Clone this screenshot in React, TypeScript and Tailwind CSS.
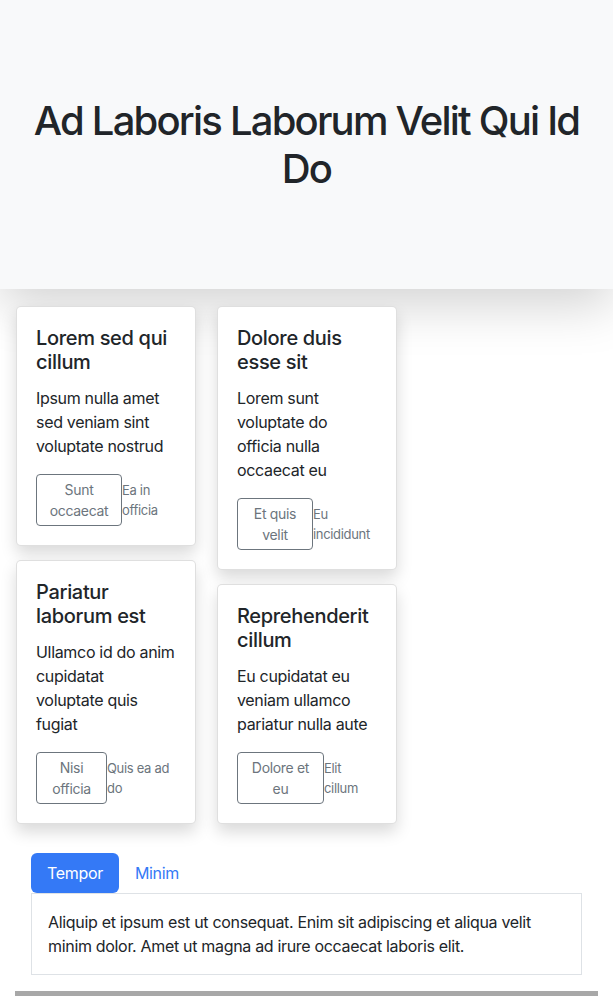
import React from "react";

type Card = { title: string[]; body: string[]; btn: string; btnW: string; small: string };

const left: Card[] = [
  { title: ["Lorem sed qui", "cillum"], body: ["Ipsum nulla amet", "sed veniam sint", "voluptate nostrud"], btn: "Sunt occaecat", btnW: "w-[86px]", small: "Ea in officia" },
  { title: ["Pariatur", "laborum est"], body: ["Ullamco id do anim", "cupidatat", "voluptate quis", "fugiat"], btn: "Nisi officia", btnW: "w-[71px]", small: "Quis ea ad do" },
];
const right: Card[] = [
  { title: ["Dolore duis", "esse sit"], body: ["Lorem sunt", "voluptate do", "officia nulla", "occaecat eu"], btn: "Et quis velit", btnW: "w-[76px]", small: "Eu incididunt" },
  { title: ["Reprehenderit", "cillum"], body: ["Eu cupidatat eu", "veniam ullamco", "pariatur nulla aute"], btn: "Dolore et eu", btnW: "w-[87px]", small: "Elit cillum" },
];

function CardView({ c }: { c: Card }) {
  return (
    <div className="bg-white border border-[rgba(0,0,0,0.125)] rounded-[5px] shadow-[0_8px_16px_rgba(0,0,0,0.15)] p-[19px]">
      <h5 className="text-[20px] leading-[24px] font-medium text-[#212529] mb-[12px]">
        {c.title.map((t) => (
          <span key={t} className="block whitespace-nowrap">{t}</span>
        ))}
      </h5>
      <p className="text-[16px] leading-[24px] text-[#212529] mb-[16px]">
        {c.body.map((t) => (
          <span key={t} className="block whitespace-nowrap">{t}</span>
        ))}
      </p>
      <div className="flex items-center">
        <button className={`${c.btnW} shrink-0 border border-[#6c757d] rounded-[4px] px-[6px] py-[4px] text-[14px] leading-[21px] text-[#6c757d] text-center bg-white`}>
          {c.btn}
        </button>
        <span className="text-[13px] leading-[20px] text-[#6c757d]">{c.small}</span>
      </div>
    </div>
  );
}

export default function App() {
  return (
    <div className="min-h-[996px] bg-white overflow-hidden tracking-[-0.02em]" style={{ fontFamily: "Inter, 'Noto Sans', sans-serif" }}>
      <header className="relative z-10 h-[289px] bg-[#f8f9fa] shadow-[0_16px_48px_rgba(0,0,0,0.175)] flex items-center justify-center px-[16px]">
        <h1 className="text-[40px] leading-[48px] font-medium text-[#212529] text-center tracking-[-0.045em]">
          <span className="block whitespace-nowrap">Ad Laboris Laborum Velit Qui Id</span>
          <span className="block">Do</span>
        </h1>
      </header>
      <div className="relative z-20 flex gap-[21px] px-[16px] pt-[17px]">
        <div className="w-[180px] flex flex-col gap-[14px]">
          {left.map((c) => (
            <CardView key={c.btn} c={c} />
          ))}
        </div>
        <div className="w-[180px] flex flex-col gap-[14px]">
          {right.map((c) => (
            <CardView key={c.btn} c={c} />
          ))}
        </div>
      </div>
      <div className="px-[31px] pt-[29px]">
        <div className="flex">
          <button className="h-[40px] px-[16px] rounded-[6px] bg-[#3479f6] text-white text-[16px] leading-[24px]">Tempor</button>
          <button className="h-[40px] px-[16px] text-[#3479f6] text-[16px] leading-[24px]">Minim</button>
        </div>
        <div className="border border-[#dee2e6] px-[16px] py-[16px] text-[16px] leading-[24px] text-[#212529]">
          Aliquip et ipsum est ut consequat. Enim sit adipiscing et aliqua velit minim dolor. Amet ut magna ad irure occaecat laboris elit.
        </div>
      </div>
      <div className="mx-[15px] mt-[16px] h-[8px] bg-[#a8a8a8]" />
    </div>
  );
}
